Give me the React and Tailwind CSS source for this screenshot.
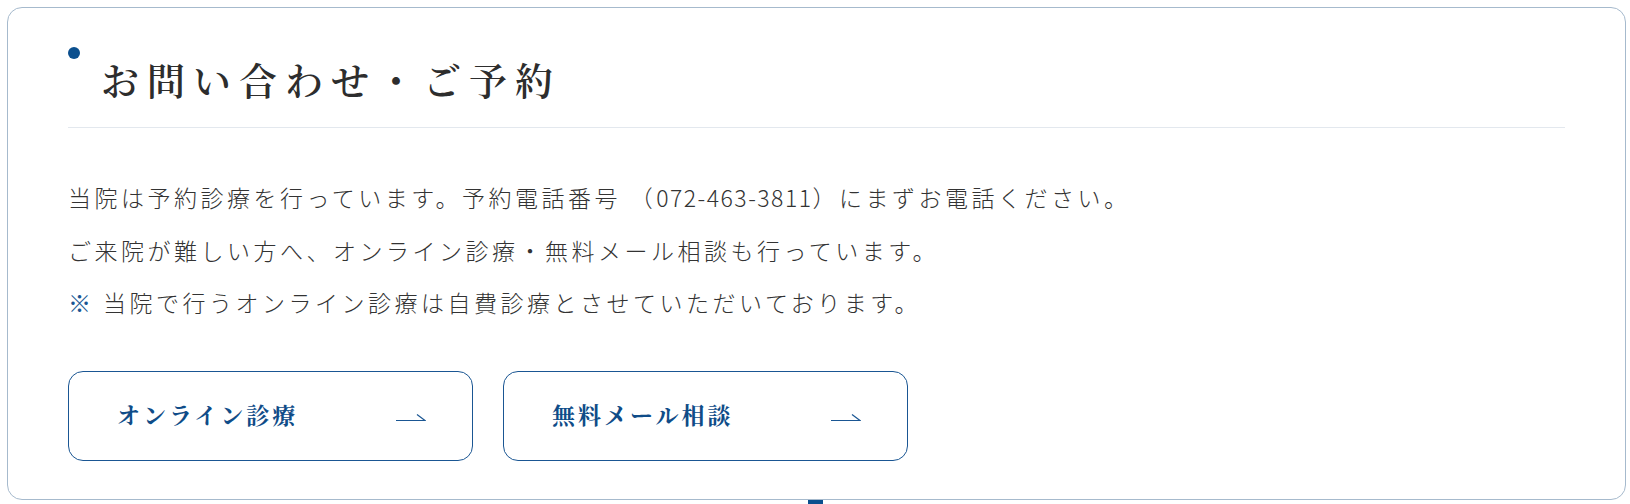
import React from "react";

const serif = "font-['Noto_Serif_CJK_JP','Noto_Sans_CJK_JP',serif]";
const sans = "font-['Noto_Sans_CJK_JP','Noto_Sans',sans-serif]";

const links = [
  { label: "オンライン診療", href: "#online" },
  { label: "無料メール相談", href: "#mail" },
];

const Arrow = () => (
  <svg width="30" height="10" viewBox="0 0 30 10" fill="none" className="shrink-0">
    <path d="M0 9.5H29L21 3.5" stroke="#1a5693" strokeWidth="1.2" />
  </svg>
);

const ContactCard = () => {
  return (
    <section className="ml-[7px] mr-[4px] mt-[7px] rounded-[15px] border border-[#a6bacd] bg-white px-[60px] pt-[42px] pb-[38px]">
      <div className="relative border-b border-[#e3e8ee] pb-[20px]">
        <span className="absolute left-0 top-[-3px] h-[12px] w-[12px] rounded-full bg-[#0b4f8e]" />
        <h2
          className={`${serif} pl-[33px] text-[38px] leading-[57px] font-semibold tracking-[8px] text-[#2d2d2d]`}
        >
          お問い合わせ・ご予約
        </h2>
      </div>

      <div className={`${sans} mt-[43px] text-[23px] font-light leading-[52.5px] tracking-[3.5px] text-[#333333]`}>
        <p>
          当院は予約診療を行っています。予約電話番号 （<span className="tracking-[1.5px]">072-463-3811</span>）にまずお電話ください。
        </p>
        <p>ご来院が難しい方へ、オンライン診療・無料メール相談も行っています。</p>
        <p>
          <span className="text-[#1a5693]">※</span> 当院で行うオンライン診療は自費診療とさせていただいております。
        </p>
      </div>

      <div className="mt-[42px] flex gap-[30px]">
        {links.map((link) => (
          <a
            key={link.href}
            href={link.href}
            className="flex h-[90px] w-[405px] items-center justify-between rounded-[15px] border border-[#1a5693] pl-[48px] pr-[46px]"
          >
            <span className={`${serif} text-[23px] font-bold tracking-[3px] text-[#0f4c88]`}>
              {link.label}
            </span>
            <Arrow />
          </a>
        ))}
      </div>
    </section>
  );
};

export default function App() {
  return (
    <div className="min-h-[504px] bg-white">
      <ContactCard />
      <div className="mx-auto h-[5px] w-[15px] bg-[#0b4f8e]" />
    </div>
  );
}
